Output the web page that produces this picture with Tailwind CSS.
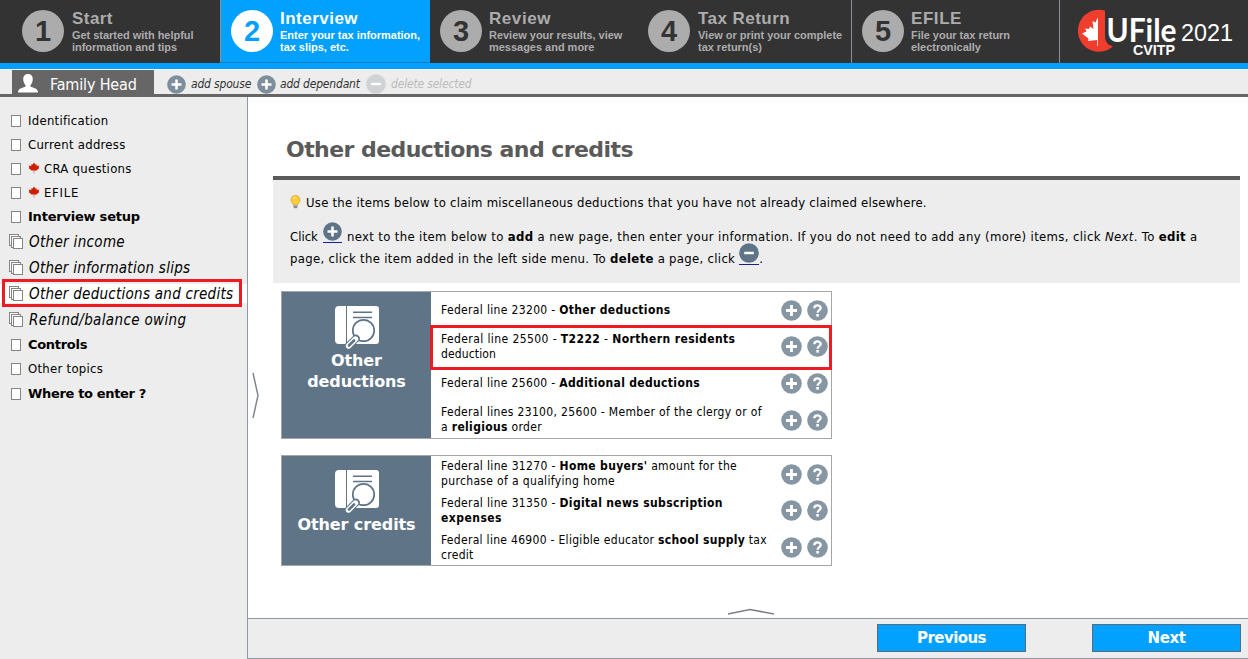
<!DOCTYPE html>
<html lang="en">
<head>
<meta charset="utf-8">
<title>UFile 2021</title>
<script src="https://cdn.jsdelivr.net/npm/@tailwindcss/browser@4"></script>
</head>
<body class="w-[1248px] h-[659px] overflow-hidden bg-white text-black font-['DejaVu_Sans',sans-serif]">
<svg class="hidden">
  <symbol id="plus" viewBox="0 0 21 21"><circle cx="10.5" cy="10.5" r="10.3" fill="currentColor"/><path d="M10.5 5v11M5 10.5h11" stroke="#fff" stroke-width="2.8"/></symbol>
  <symbol id="minus" viewBox="0 0 21 21"><circle cx="10.5" cy="10.5" r="10.3" fill="currentColor"/><path d="M5.500 10.5h10" stroke="#fff" stroke-width="2.6"/></symbol>
  <symbol id="help" viewBox="0 0 21 21"><circle cx="10.5" cy="10.5" r="10.3" fill="currentColor"/><path d="M7.3 8.2C7.3 4.6 13.7 4.6 13.7 8C13.7 10.2 10.6 10 10.6 12.7" fill="none" stroke="#fff" stroke-width="2.3"/><rect x="9.3" y="14" width="2.6" height="2.6" fill="#fff"/></symbol>
  <symbol id="leaf" viewBox="0 0 12 12"><path d="M6 11.5V8" stroke="#e08a80" stroke-width="1"/><path d="M6 .5 7.3 2.6 8.7 2.2 8.6 4 11.3 3.6 10.6 5.2 11.4 6 8.4 8.4H3.6L.6 6l.8-.8L.7 3.6 3.4 4 3.3 2.2l1.4.4z" fill="#cc1f00"/></symbol>
  <symbol id="page" viewBox="0 0 11 13"><rect x=".5" y=".5" width="9" height="11" fill="#fff" stroke="#858585"/></symbol>
  <symbol id="pages" viewBox="0 0 15 16"><rect x=".5" y=".5" width="9" height="11" fill="#fff" stroke="#858585"/><rect x="2.5" y="2.5" width="9" height="11" fill="#fff" stroke="#858585"/><rect x="4.5" y="4.5" width="9" height="10" fill="#fff" stroke="#858585"/></symbol>
  <symbol id="book" viewBox="0 0 45 44"><path d="M4 0H11V38H4Q0 38 0 34V4Q0 0 4 0ZM12 0H41Q44 0 44 3V35Q44 38 41 38H12Z" fill="#fff"/><path d="M18 6.2H37M18 11.5H37" stroke="#5f7587" stroke-width="1.6"/><circle cx="28.5" cy="24.5" r="12" fill="#fff"/><circle cx="28.5" cy="24.5" r="10.7" fill="#fff" stroke="#5f7587" stroke-width="1.7"/><path d="M21 32.5 13.5 40" stroke="#5f7587" stroke-width="7.5" stroke-linecap="round"/><path d="M20.5 33 13.5 40" stroke="#fff" stroke-width="5.4" stroke-linecap="round"/><path d="M19 34.5 14 39.5" stroke="#5f7587" stroke-width="2.6" stroke-linecap="round"/></symbol>
</svg>
<div class="flex h-full flex-col">
  <header class="flex h-[63px] shrink-0 bg-[#333] font-['Liberation_Sans',sans-serif] font-bold text-[#acacac] text-[11px] leading-[12px] whitespace-nowrap">
    <div class="flex w-[220px] pl-[22px] pt-[10px]">
      <div class="flex size-[42px] items-center justify-center rounded-full bg-[#acacac] text-[29px] text-[#333]">1</div>
      <div class="ml-[8px] tracking-[-0.03px]"><div class="text-[17px] leading-[18px] pb-px tracking-[0.45px]">Start</div><div>Get started with helpful</div><div>information and tips</div></div>
    </div>
    <div class="flex w-[210px] border-l border-[#8b9197] border-b border-b-[#0f7cc0] bg-[#02a0ff] pl-[10px] pt-[10px] text-white">
      <div class="flex size-[42px] items-center justify-center rounded-full bg-white text-[29px] text-[#02a0ff]">2</div>
      <div class="ml-[7px] tracking-[-0.02px]"><div class="text-[17px] leading-[18px] pb-px tracking-[0.48px]">Interview</div><div>Enter your tax information,</div><div>tax slips, etc.</div></div>
    </div>
    <div class="flex w-[210px] pl-[10px] pt-[10px]">
      <div class="flex size-[42px] items-center justify-center rounded-full bg-[#acacac] text-[29px] text-[#333]">3</div>
      <div class="ml-[7px] tracking-[-0.02px]"><div class="text-[17px] leading-[18px] pb-px tracking-[0.57px]">Review</div><div>Review your results, view</div><div>messages and more</div></div>
    </div>
    <div class="flex w-[211px] pl-[8px] pt-[10px]">
      <div class="flex size-[42px] items-center justify-center rounded-full bg-[#acacac] text-[29px] text-[#333]">4</div>
      <div class="ml-[8px] tracking-[-0.02px]"><div class="text-[17px] leading-[18px] pb-px tracking-[0.45px]">Tax Return</div><div>View or print your complete</div><div>tax return(s)</div></div>
    </div>
    <div class="flex w-[208px] border-l border-[#8b9197] pl-[10px] pt-[10px]">
      <div class="flex size-[42px] items-center justify-center rounded-full bg-[#acacac] text-[29px] text-[#333]">5</div>
      <div class="ml-[7px] tracking-[-0.03px]"><div class="text-[17px] leading-[18px] pb-px tracking-[0.57px]">EFILE</div><div>File your tax return</div><div>electronically</div></div>
    </div>
    <div class="flex grow border-l border-[#8b9197] pl-[16px] pt-[9px]">
      <svg class="h-[52px] w-[160px] overflow-visible" viewBox="0 0 160 52">
        <path d="M29 1.600V29Q30 36 37 37.300A21 21 0 1 1 29 1.600Z" fill="#ef3e2e"/>
        <path d="M21.500 9 19.500 13.500 16.500 12 17.500 20 14 17.500 13 20 9 19.500 10.500 22.500 6 24.500 12.500 29.500 12 32 21.300 31V37H22V9Z" fill="#fff"/>
        <g fill="#fff" font-family="Lato, sans-serif">
          <text x="30.500" y="32.500" font-size="32" font-weight="700" textLength="70" lengthAdjust="spacingAndGlyphs">UFile</text>
          <text x="57" y="45.500" font-size="14.500" font-family="Liberation Sans" font-weight="700" textLength="42" lengthAdjust="spacingAndGlyphs">CVITP</text>
          <text x="105" y="32" font-size="23" font-family="Liberation Sans" font-weight="400" textLength="52" lengthAdjust="spacingAndGlyphs">2021</text>
        </g>
      </svg>
    </div>
  </header>
  <div class="h-[6px] shrink-0 bg-[#02a0ff]"></div>
  <div class="flex h-[28px] shrink-0 items-start border-t border-t-white border-b-[3px] border-b-[#666] bg-[#ededed] whitespace-nowrap">
    <div class="ml-[12px] flex h-full w-[142px] items-center bg-[#666] pl-[6px] text-white">
      <svg class="mt-[2px] h-[19px] w-[20px]" viewBox="0 0 20 19"><path d="M10 0C6.500 0 5 2.500 5.300 6C5.500 8.500 6.500 10 7.500 11V12.500C6 14 0 13.500 0 18.500H20C20 13.500 14 14 12.500 12.500V11C13.500 10 14.500 8.500 14.700 6C15 2.500 13.500 0 10 0Z" fill="#fff"/></svg>
      <div class="ml-[12px] mt-[5px] font-['DejaVu_Sans_Condensed','DejaVu_Sans',sans-serif] text-[16px] leading-[18px] tracking-[-0.15px]">Family Head</div>
    </div>
    <div class="flex items-center pl-[13px] pt-[4px] font-['DejaVu_Sans_Condensed','DejaVu_Sans',sans-serif] text-[12px] italic leading-[19px] tracking-[-0.18px] text-[#333]">
      <svg class="size-[19px] text-[#7d8e9c]"><use href="#plus"/></svg><div class="ml-[5px] w-[63px]">add spouse</div>
      <svg class="ml-[3px] size-[19px] text-[#7d8e9c]"><use href="#plus"/></svg><div class="ml-[4px] w-[86px]">add dependant</div>
      <svg class="size-[20px] text-[#cfd3d6]"><use href="#minus"/></svg><div class="ml-[5px] text-[#bbb]">delete selected</div>
    </div>
  </div>
  <div class="flex min-h-0 grow">
    <nav class="w-[248px] shrink-0 border-r border-[#8f98a3] bg-[#ededed] pt-[12px] font-['DejaVu_Sans_Condensed','DejaVu_Sans',sans-serif] text-[13px] leading-[24px] tracking-[0.27px] whitespace-nowrap">
      <div class="flex h-[24px] items-center pl-[11px]"><svg class="h-[13px] w-[11px]"><use href="#page"/></svg><div class="ml-[6px]">Identification</div></div>
      <div class="flex h-[24px] items-center pl-[11px]"><svg class="h-[13px] w-[11px]"><use href="#page"/></svg><div class="ml-[6px]">Current address</div></div>
      <div class="flex h-[24px] items-center pl-[11px]"><svg class="h-[13px] w-[11px]"><use href="#page"/></svg><svg class="mb-[2px] ml-[6px] size-[12px]"><use href="#leaf"/></svg><div class="ml-[4px]">CRA questions</div></div>
      <div class="flex h-[24px] items-center pl-[11px]"><svg class="h-[13px] w-[11px]"><use href="#page"/></svg><svg class="mb-[2px] ml-[6px] size-[12px]"><use href="#leaf"/></svg><div class="ml-[4px] tracking-[0.7px]">EFILE</div></div>
      <div class="flex h-[24px] items-center pl-[11px] font-['DejaVu_Sans',sans-serif] font-bold tracking-[-0.22px]"><svg class="h-[13px] w-[11px]"><use href="#page"/></svg><div class="ml-[6px]">Interview setup</div></div>
      <div class="flex h-[26px] items-center pl-[9px] text-[15px] italic"><svg class="h-[16px] w-[15px]"><use href="#pages"/></svg><div class="ml-[5px] tracking-[0.33px]">Other income</div></div>
      <div class="flex h-[26px] items-center pl-[9px] text-[15px] italic"><svg class="h-[16px] w-[15px]"><use href="#pages"/></svg><div class="ml-[5px]">Other information slips</div></div>
      <div class="relative flex h-[26px] items-center pl-[9px] text-[15px] italic"><div class="absolute inset-x-0 top-[3px] h-[19px] bg-white"></div><div class="absolute left-[2px] top-[-2px] h-[28px] w-[240px] border-[3px] border-[#ed1c24]"></div><svg class="relative h-[16px] w-[15px]"><use href="#pages"/></svg><div class="relative ml-[5px]">Other deductions and credits</div></div>
      <div class="flex h-[26px] items-center pl-[9px] text-[15px] italic"><svg class="h-[16px] w-[15px]"><use href="#pages"/></svg><div class="ml-[5px] tracking-[0.36px]">Refund/balance owing</div></div>
      <div class="flex h-[24px] items-center pl-[11px] font-['DejaVu_Sans',sans-serif] font-bold tracking-[-0.3px]"><svg class="h-[13px] w-[11px]"><use href="#page"/></svg><div class="ml-[6px]">Controls</div></div>
      <div class="flex h-[24px] items-center pl-[11px]"><svg class="h-[13px] w-[11px]"><use href="#page"/></svg><div class="ml-[6px]">Other topics</div></div>
      <div class="flex h-[26px] items-center pl-[11px] font-['DejaVu_Sans',sans-serif] font-bold tracking-[-0.34px]"><svg class="h-[13px] w-[11px]"><use href="#page"/></svg><div class="ml-[6px]">Where to enter ?</div></div>
    </nav>
    <div class="relative flex grow flex-col">
      <main class="flex grow flex-col pl-[25px] pr-[8px] whitespace-nowrap">
        <h1 class="h-[79px] shrink-0 pl-[13px] pt-[37px] text-[22px] font-bold leading-[32px] tracking-[-0.56px] text-[#5a5a5a]">Other deductions and credits</h1>
        <section class="h-[107px] shrink-0 border-t-4 border-[#5a5a5a] bg-[#ededed] pl-[17px] pt-[12px] font-['DejaVu_Sans_Condensed','DejaVu_Sans',sans-serif] text-[13px] leading-[20px]">
          <div class="flex h-[20px] items-center">
            <svg class="h-[14px] w-[11px]" viewBox="0 0 11 14"><path d="M5.500 .6C2.500 .6 1 2.600 1 5C1 7 2.800 8.200 3.300 9.800H7.700C8.200 8.200 10 7 10 5C10 2.600 8.500 .6 5.500 .6Z" fill="#fc3" stroke="#cf9b2e" stroke-width=".7"/><path d="M3.500 4C3.700 2.800 4.300 2.200 5.500 2" stroke="#fff8c0" stroke-width="1.200" fill="none"/><path d="M3.300 10.500H7.700V12L6.500 13.300H4.500L3.300 12Z" fill="#8b8f95"/></svg>
            <div class="ml-[5px] pt-px tracking-[0.24px]">Use the items below to claim miscellaneous deductions that you have not already claimed elsewhere.</div>
          </div>
          <div class="mt-[10px] flex h-[25px] items-end">
            <div>Click</div><div class="ml-[5px] mr-[5px] mb-[4px] border-b border-[#1a1a9c] pb-px"><svg class="size-[19px] text-[#5f7587]"><use href="#plus"/></svg></div><div class="tracking-[0.35px]">next to the item below to <b>add</b> a new page, then enter your information. If you do not need to add any (more) items, click <i>Next</i>. To <b>edit</b> a</div>
          </div>
          <div class="flex h-[22px] items-end">
            <div class="tracking-[0.3px]">page, click the item added in the left side menu. To <b>delete</b> a page, click</div><div class="ml-[4px] mb-[4px] border-b border-[#1a1a9c] pb-px"><svg class="size-[20px] text-[#5f7587]"><use href="#minus"/></svg></div><div>.</div>
          </div>
        </section>
        <section class="relative ml-[8px] mt-[8px] flex h-[148px] w-[551px] shrink-0 border border-[#a6a6a6] font-['DejaVu_Sans_Condensed','DejaVu_Sans',sans-serif] text-[12px] leading-[15px] tracking-[0.34px]">
          <div class="flex w-[149px] flex-col items-center bg-[#5f7587] pt-[14px] font-['DejaVu_Sans',sans-serif] text-[16px] font-bold leading-[21px] tracking-[-0.12px] text-white"><svg class="ml-px h-[44px] w-[45px]"><use href="#book"/></svg><div>Other</div><div>deductions</div></div>
          <div class="grow pl-[10px]">
            <div class="flex h-[36px] items-center"><div class="w-[340px] pt-px">Federal line 23200 - <b>Other deductions</b></div><svg class="size-[21px] text-[#8796a3]"><use href="#plus"/></svg><svg class="ml-[5px] size-[21px] text-[#8796a3]"><use href="#help"/></svg></div>
            <div class="flex h-[37px] items-center"><div class="w-[340px]"><span class="tracking-[0.41px]">Federal line 25500 - <b>T2222</b> - <b>Northern residents</b></span><br><span class="tracking-[0.13px]">deduction</span></div><svg class="size-[21px] text-[#8796a3]"><use href="#plus"/></svg><svg class="ml-[5px] size-[21px] text-[#8796a3]"><use href="#help"/></svg></div>
            <div class="flex h-[37px] items-center"><div class="w-[340px]">Federal line 25600 - <b>Additional deductions</b></div><svg class="size-[21px] text-[#8796a3]"><use href="#plus"/></svg><svg class="ml-[5px] size-[21px] text-[#8796a3]"><use href="#help"/></svg></div>
            <div class="flex h-[36px] items-center"><div class="w-[340px]">Federal lines 23100, 25600 - Member of the clergy or of<br>a <b>religious</b> order</div><svg class="size-[21px] text-[#8796a3]"><use href="#plus"/></svg><svg class="ml-[5px] size-[21px] text-[#8796a3]"><use href="#help"/></svg></div>
          </div>
          <div class="absolute left-[148px] top-[33px] h-[45px] w-[402px] border-[3px] border-[#ed1c24]"></div>
        </section>
        <section class="ml-[8px] mt-[16px] flex h-[111px] w-[551px] shrink-0 border border-[#a6a6a6] font-['DejaVu_Sans_Condensed','DejaVu_Sans',sans-serif] text-[12px] leading-[15px] tracking-[0.35px]">
          <div class="flex w-[149px] flex-col items-center bg-[#5f7587] pt-[14px] font-['DejaVu_Sans',sans-serif] text-[16px] font-bold leading-[21px] tracking-[-0.1px] text-white"><svg class="ml-px h-[44px] w-[45px]"><use href="#book"/></svg><div>Other credits</div></div>
          <div class="grow pl-[10px]">
            <div class="flex h-[36px] items-center"><div class="w-[340px]">Federal line 31270 - <b>Home buyers'</b> amount for the<br>purchase of a qualifying home</div><svg class="size-[21px] text-[#8796a3]"><use href="#plus"/></svg><svg class="ml-[5px] size-[21px] text-[#8796a3]"><use href="#help"/></svg></div>
            <div class="flex h-[37px] items-center"><div class="w-[340px] pt-px">Federal line 31350 - <b>Digital news subscription</b><br><b class="tracking-[0.47px]">expenses</b></div><svg class="size-[21px] text-[#8796a3]"><use href="#plus"/></svg><svg class="ml-[5px] size-[21px] text-[#8796a3]"><use href="#help"/></svg></div>
            <div class="flex h-[36px] items-center"><div class="w-[340px] pt-[2px] tracking-[0.3px]">Federal line 46900 - Eligible educator <b>school supply</b> tax<br>credit</div><svg class="size-[21px] text-[#8796a3]"><use href="#plus"/></svg><svg class="ml-[5px] size-[21px] text-[#8796a3]"><use href="#help"/></svg></div>
          </div>
        </section>
      </main>
      <svg class="absolute left-[4px] top-[275px] h-[47px] w-[8px]" viewBox="0 0 8 47"><path d="M1 1 6 23.500 1 46" fill="none" stroke="#808890" stroke-width="1.500"/></svg>
      <svg class="absolute left-[479px] top-[511px] h-[7px] w-[48px]" viewBox="0 0 48 7"><path d="M1 6 23 1.500 47 6" fill="none" stroke="#808080" stroke-width="1.500"/></svg>
      <footer class="flex h-[41px] shrink-0 justify-end gap-[66px] border-y border-[#8f98a3] bg-[#ededed] pr-[7px] pt-[5px] text-[15px] font-bold text-white">
        <button class="h-[28px] w-[149px] border border-[#5c6b78] bg-[#02a0ff] tracking-[-0.55px]">Previous</button>
        <button class="h-[28px] w-[149px] border border-[#5c6b78] bg-[#02a0ff] tracking-[-0.39px]">Next</button>
      </footer>
    </div>
  </div>
</div>
</body>
</html>
